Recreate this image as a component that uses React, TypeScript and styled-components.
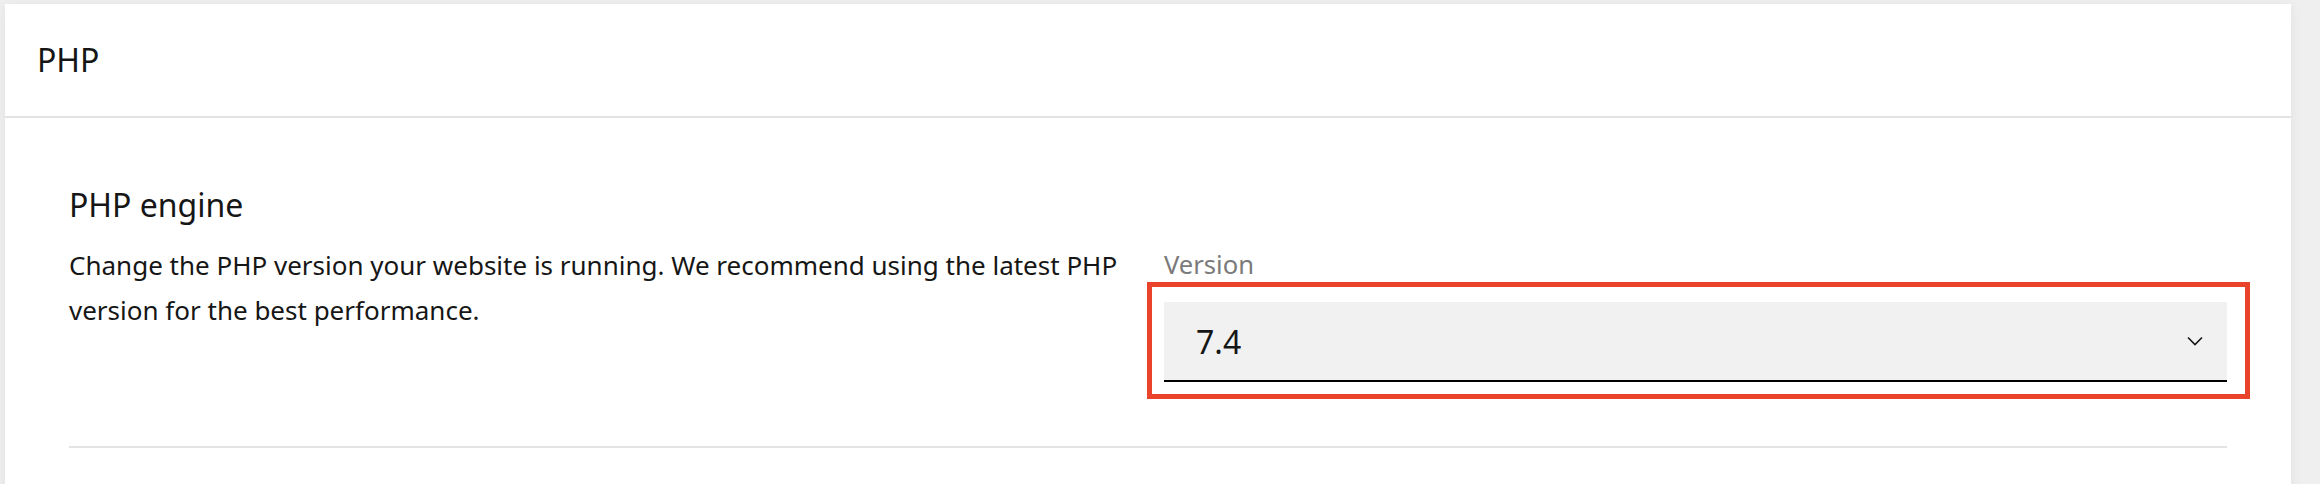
import React from "react";
import styled, { createGlobalStyle } from "styled-components";

const GlobalStyle = createGlobalStyle`
  html, body {
    margin: 0;
    padding: 0;
    background: #efefef;
  }
  body {
    font-family: "Noto Sans", "Open Sans", sans-serif;
    color: #161616;
  }
`;

const Page = styled.div`
  padding: 4px 29px 0 5px;
  min-height: 484px;
  box-sizing: border-box;
`;

const Card = styled.section`
  background: #ffffff;
  box-shadow: 0 2px 12px rgba(0, 0, 0, 0.06);
`;

const CardHeader = styled.header`
  height: 112px;
  display: flex;
  align-items: center;
  padding: 0 32px;
  border-bottom: 2px solid #e3e3e3;
`;

const HeaderTitle = styled.h1`
  margin: 0;
  font-size: 32px;
  font-weight: 400;
  line-height: 1;
`;

const CardBody = styled.div`
  padding: 67px 64px 64px;
`;

const SectionTitle = styled.h2`
  margin: 0 0 18px;
  font-size: 32px;
  font-weight: 400;
  line-height: 40px;
`;

const Row = styled.div`
  display: grid;
  grid-template-columns: 1fr 1fr;
  column-gap: 32px;
  align-items: start;
`;

const Description = styled.p`
  margin: 0;
  font-size: 26px;
  line-height: 44.8px;
`;

const Field = styled.div`
  display: flex;
  flex-direction: column;
`;

const Label = styled.label`
  font-size: 25.6px;
  line-height: 44.8px;
  color: #7a7a7a;
  margin-bottom: 14.5px;
`;

const SelectWrap = styled.div`
  position: relative;
`;

const Highlight = styled.div`
  position: absolute;
  top: -20px;
  left: -17px;
  right: -23px;
  bottom: -17px;
  border: 5px solid #e9432b;
  pointer-events: none;
`;

const SelectBox = styled.div`
  height: 78px;
  background: #f1f1f1;
  border-bottom: 2px solid #000000;
  display: flex;
  align-items: center;
  justify-content: space-between;
  padding: 0 24px 0 32px;
`;

const SelectValue = styled.span`
  font-size: 32px;
  color: #161616;
`;

const Chevron = styled.svg`
  width: 16px;
  height: 10px;
  display: block;
`;

const Divider = styled.hr`
  margin: 64px 0 0;
  border: 0;
  height: 2px;
  background: #e3e3e3;
`;

export default function App() {
  return (
    <>
      <GlobalStyle />
      <Page>
        <Card>
          <CardHeader>
            <HeaderTitle>PHP</HeaderTitle>
          </CardHeader>
          <CardBody>
            <SectionTitle>PHP engine</SectionTitle>
            <Row>
              <Description>
                Change the PHP version your website is running. We recommend
                using the latest PHP version for the best performance.
              </Description>
              <Field>
                <Label>Version</Label>
                <SelectWrap>
                  <SelectBox>
                    <SelectValue>7.4</SelectValue>
                    <Chevron viewBox="0 0 16 10" fill="none">
                      <path
                        d="M1 1.5 L8 8.5 L15 1.5"
                        stroke="#161616"
                        strokeWidth="1.6"
                      />
                    </Chevron>
                  </SelectBox>
                  <Highlight />
                </SelectWrap>
              </Field>
            </Row>
            <Divider />
          </CardBody>
        </Card>
      </Page>
    </>
  );
}
